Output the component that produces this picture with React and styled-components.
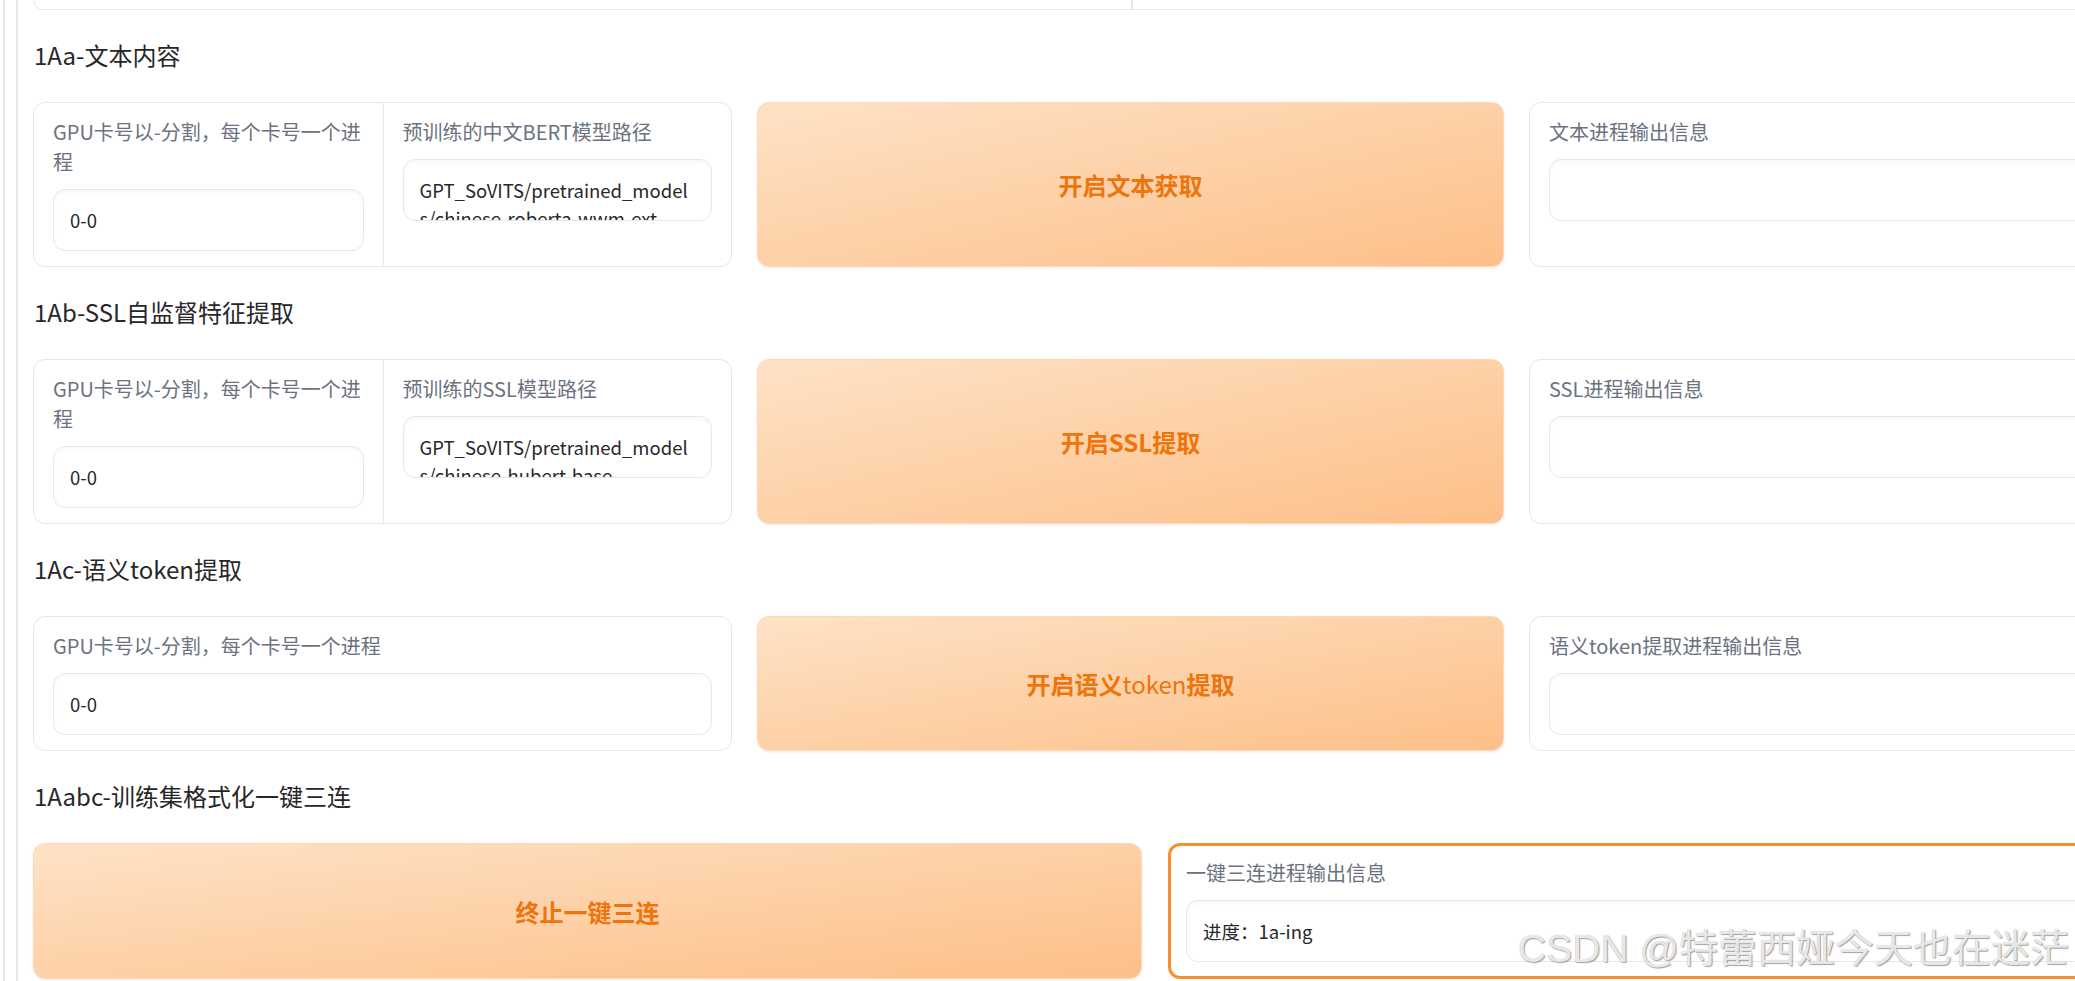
import React from 'react';
import styled, { createGlobalStyle } from 'styled-components';

const GlobalStyle = createGlobalStyle`
  html, body {
    margin: 0;
    padding: 0;
    background: #ffffff;
    overflow: hidden;
  }
  body {
    font-family: "Noto Sans CJK SC", "Noto Sans", sans-serif;
    color: #27272a;
  }
`;

// built at render time so the styled parts below are already defined
const getSections = () => [
    {
        title: '1Aa-文本内容',
        fields: [
            { label: 'GPU卡号以-分割，每个卡号一个进程', value: '0-0' },
            { label: '预训练的中文BERT模型路径', value: 'GPT_SoVITS/pretrained_models/chinese-roberta-wwm-ext' }
        ],
        button: <>开启文本获取</>,
        output: '文本进程输出信息'
    },
    {
        title: '1Ab-SSL自监督特征提取',
        fields: [
            { label: 'GPU卡号以-分割，每个卡号一个进程', value: '0-0' },
            { label: '预训练的SSL模型路径', value: 'GPT_SoVITS/pretrained_models/chinese-hubert-base' }
        ],
        button: <>开启SSL提取</>,
        output: 'SSL进程输出信息'
    },
    {
        title: '1Ac-语义token提取',
        fields: [
            { label: 'GPU卡号以-分割，每个卡号一个进程', value: '0-0' }
        ],
        button: <>开启语义<Light>token</Light>提取</>,
        output: '语义token提取进程输出信息'
    }
];

class App extends React.Component {
    render() {
        const sections = getSections();
        return (
            <Page>
                <GlobalStyle />
                <OuterRail>
                    <InnerRail>
                        <Stack>
                            <TopCard>
                                <TopCell />
                                <TopCell $divider />
                            </TopCard>

                            {sections.map((s) => (
                                <React.Fragment key={s.title}>
                                    <Heading>{s.title}</Heading>
                                    <Row>
                                        <Group $cols={s.fields.length}>
                                            {s.fields.map((f, i) => (
                                                <Field key={f.label} $divider={i > 0}>
                                                    <Label>{f.label}</Label>
                                                    <Input>{f.value}</Input>
                                                </Field>
                                            ))}
                                        </Group>
                                        <Button type="button">{s.button}</Button>
                                        <OutputCard>
                                            <Label>{s.output}</Label>
                                            <Input />
                                        </OutputCard>
                                    </Row>
                                </React.Fragment>
                            ))}

                            <Heading>1Aabc-训练集格式化一键三连</Heading>
                            <WideRow>
                                <Button type="button">终止一键三连</Button>
                                <OutputCard $pending>
                                    <Label>一键三连进程输出信息</Label>
                                    <Input>进度：1a-ing</Input>
                                </OutputCard>
                            </WideRow>
                        </Stack>
                    </InnerRail>
                </OuterRail>
                <Watermark>CSDN @特蕾西娅今天也在迷茫</Watermark>
            </Page>
        );
    }
}

export default App;

const Page = styled.div`
    position: relative;
    height: 981px;
    overflow: hidden;
    padding-left: 3px;
`;

const OuterRail = styled.div`
    height: 100%;
    border-left: 2px solid #e6e6ee;
    padding-left: 11px;
`;

const InnerRail = styled.div`
    height: 100%;
    border-left: 2px solid #e5e7eb;
    padding-left: 15px;
`;

const Stack = styled.div`
    width: 2244px;
    display: flex;
    flex-direction: column;
    gap: 24px;
`;

const TopCard = styled.div`
    height: 9px;
    display: grid;
    grid-template-columns: 1097px 1fr;
    border: 1px solid #e5e7eb;
    border-top: none;
    border-radius: 0 0 12px 12px;
`;

const TopCell = styled.div`
    border-left: ${(p) => (p.$divider ? '2px solid #e5e7eb' : 'none')};
`;

const Heading = styled.div`
    height: 44px;
    box-sizing: border-box;
    padding: 0 0 4px 1px;
    display: flex;
    align-items: center;
    font-size: 24px;
    color: #27272a;
`;

const Row = styled.div`
    display: grid;
    grid-template-columns: 699px 747px 1fr;
    gap: 25px;
`;

const WideRow = styled.div`
    display: grid;
    grid-template-columns: 1109px 1fr;
    gap: 26px;
    height: 136px;
`;

const Group = styled.div`
    display: grid;
    grid-template-columns: repeat(${(p) => p.$cols}, 1fr);
    border: 1px solid #e5e7eb;
    border-radius: 12px;
    background: #ffffff;
    overflow: hidden;
`;

const Field = styled.div`
    display: flex;
    flex-direction: column;
    gap: 12px;
    padding: 14px 19px 15px;
    border-left: ${(p) => (p.$divider ? '1px solid #e5e7eb' : 'none')};
    min-width: 0;
`;

const Label = styled.span`
    font-size: 20px;
    line-height: 30px;
    color: #6b7280;
`;

const Input = styled.div`
    height: 62px;
    box-sizing: border-box;
    padding: 16px 13px 0 16px;
    border: 1px solid #e5e7eb;
    border-radius: 12px;
    box-shadow: inset 0 2px 4px rgba(0, 0, 0, 0.035);
    font-size: 18.5px;
    line-height: 28px;
    color: #27272a;
    word-break: break-all;
    overflow: hidden;
`;

const Button = styled.button`
    display: flex;
    align-items: center;
    justify-content: center;
    border: 1px solid #fdd9b8;
    border-radius: 12px;
    background: linear-gradient(to bottom right, #fee2c6, #fdbf88);
    box-shadow: 0 1px 3px rgba(0, 0, 0, 0.08);
    font-family: "Noto Sans CJK SC", "Noto Sans", sans-serif;
    font-size: 24px;
    font-weight: 700;
    color: #ee740c;
    cursor: pointer;

    &:focus {
        outline: 0;
    }
`;

const Light = styled.span`
    font-weight: 400;
`;

const OutputCard = styled.div`
    display: flex;
    flex-direction: column;
    gap: 12px;
    box-sizing: border-box;
    border: ${(p) => (p.$pending ? '3px solid #fb8f2c' : '1px solid #e5e7eb')};
    border-radius: 12px;
    padding: ${(p) => (p.$pending ? '12px 16px 12px 15px' : '14px 19px 15px')};
    background: #ffffff;
    min-width: 0;
`;

const Watermark = styled.div`
    position: absolute;
    right: 6px;
    bottom: 12px;
    font-family: "Liberation Sans", "Noto Sans CJK SC", sans-serif;
    font-size: 39px;
    line-height: 40px;
    color: rgba(238, 238, 238, 0.95);
    text-shadow: 1px 1px 1px rgba(0, 0, 0, 0.35), 0 0 1px rgba(0, 0, 0, 0.25);
    white-space: nowrap;
    pointer-events: none;
`;
